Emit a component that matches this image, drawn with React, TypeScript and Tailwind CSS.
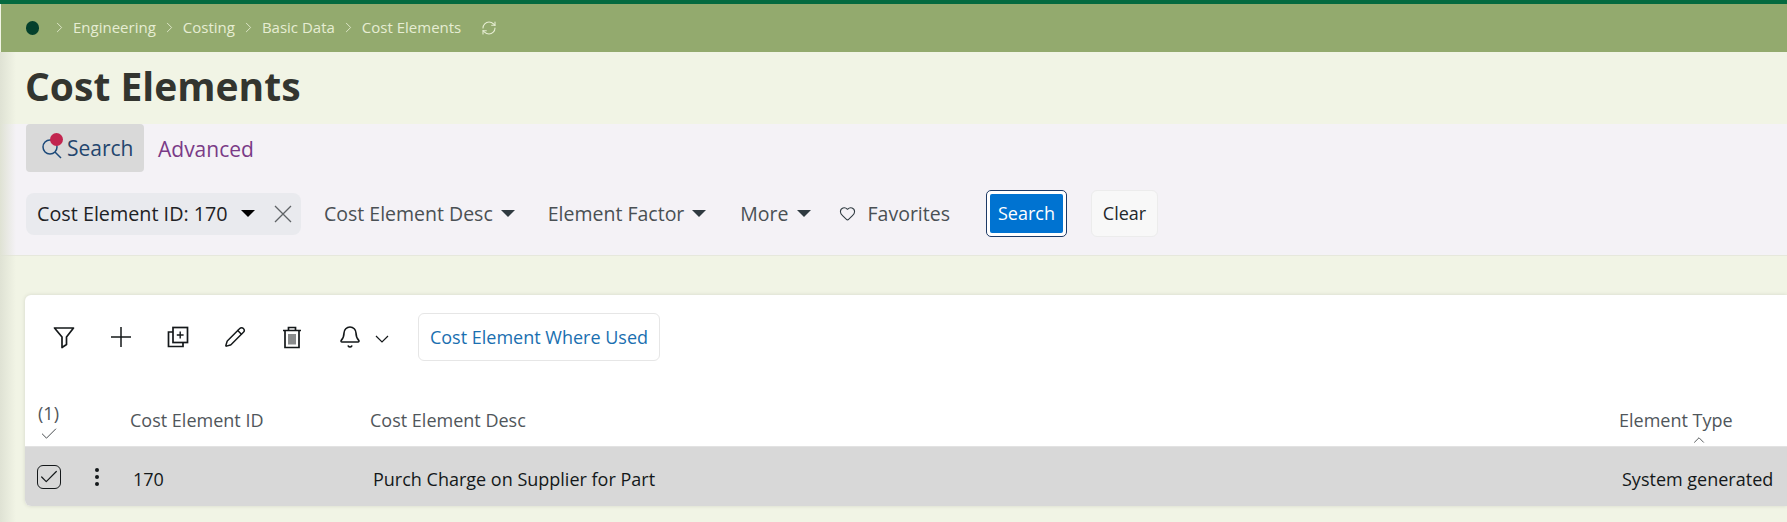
import { Bell, Check, ChevronRight, ChevronUp, Heart, Pencil, RefreshCw } from 'lucide-react';

const crumbs = ['Engineering', 'Costing', 'Basic Data', 'Cost Elements'];

function Caret({ color = 'border-t-[#2f3a40]' }: { color?: string }) {
  return <span className={`inline-block h-0 w-0 border-x-[7px] border-t-[7px] border-x-transparent ${color}`} />;
}

function FilterMenu({ label, className }: { label: string; className: string }) {
  return (
    <div className={`flex items-center gap-[8px] text-[19.5px] text-[#4a5054] ${className}`}>
      <span>{label}</span>
      <Caret />
    </div>
  );
}

function FunnelIcon() {
  return (
    <svg width="24" height="24" viewBox="0 0 24 24" fill="none" stroke="#14181a" strokeWidth="1.7" strokeLinejoin="round">
      <path d="M2.5 3h19l-7 9v7.5l-4.5 3V12z" />
    </svg>
  );
}

function PlusIcon() {
  return (
    <svg width="20" height="20" viewBox="0 0 20 20" fill="none" stroke="#14181a" strokeWidth="1.5">
      <path d="M10 0v20M0 10h20" />
    </svg>
  );
}

function CopyPlusIcon() {
  return (
    <svg width="24" height="24" viewBox="0 0 24 24" fill="none" stroke="#14181a" strokeWidth="1.7">
      <rect x="7" y="2.5" width="14.5" height="15" />
      <path d="M7 7H2.5v14.5H17V17.5" />
      <path d="M14.2 6.5v7M10.8 10h6.8" strokeWidth="1.4" />
    </svg>
  );
}

function TrashIcon() {
  return (
    <svg width="24" height="24" viewBox="0 0 24 24" fill="none" stroke="#14181a" strokeWidth="1.7">
      <path d="M3 5.5h18M8.5 5.5V2.5h7v3" />
      <path d="M5 5.5v17h14v-17" />
      <path d="M9 9v10.5M11 9v10.5M13 9v10.5M15 9v10.5" strokeWidth="1" />
    </svg>
  );
}

function CloseIcon() {
  return (
    <svg width="18" height="18" viewBox="0 0 18 18" fill="none" stroke="#5f6366" strokeWidth="1.3">
      <path d="M1 1l16 16M17 1L1 17" />
    </svg>
  );
}

function SmallChevron() {
  return (
    <svg width="14" height="8" viewBox="0 0 14 8" fill="none" stroke="#14181a" strokeWidth="1.2">
      <path d="M1 1l6 6 6-6" />
    </svg>
  );
}

export default function App() {
  return (
    <div className="relative h-[522px] w-[1787px] overflow-hidden bg-[#f1f4e5] font-['Open_Sans',sans-serif]">
      <div className="h-1 bg-[#046a3f]" />

      <div className="ml-px flex h-12 items-center bg-[#93aa6e] pb-px pl-[25px] text-[15px] text-[#e6edd3]">
        <span className="h-[14px] w-[13px] rounded-full bg-[#04402c]" />
        <ChevronRight size={17} strokeWidth={1.2} className="ml-[12px] mr-[5px]" />
        {crumbs.map((crumb, i) => (
          <div key={crumb} className="flex items-center">
            {i > 0 && <ChevronRight size={17} strokeWidth={1.2} className="mx-[5px]" />}
            <span>{crumb}</span>
          </div>
        ))}
        <RefreshCw size={16} strokeWidth={1.6} className="ml-[20px]" />
      </div>

      <h1 className="ml-[25px] flex h-[72px] items-center pb-[4px] text-[39px] font-bold text-[#33352f]">Cost Elements</h1>

      <section className="ml-px h-[132px] border-b border-[#e6e8dc] bg-[#f4f2f6] pl-[25px]">
        <div className="flex h-12 items-center">
          <div className="flex h-12 w-[118px] items-center rounded-[4px] bg-[#d9d9d9] pl-[15px]">
            <span className="relative h-6 w-[22px]">
              <svg width="22" height="24" viewBox="0 0 22 24" fill="none" stroke="#1d4a7a" strokeWidth="1.5">
                <circle cx="9" cy="11" r="7" />
                <path d="M14 16l6 6" />
              </svg>
              <span className="absolute left-[9px] top-[-3px] h-[13px] w-[13px] rounded-full bg-[#c2254f]" />
            </span>
            <span className="ml-[4px] pt-px text-[21px] text-[#23456e]">Search</span>
          </div>
          <span className="ml-[14px] pt-[4px] text-[21px] text-[#7a3b87]">Advanced</span>
        </div>

        <div className="mt-[18px] flex h-[47px] items-center">
          <div className="flex h-[42px] w-[275px] items-center rounded-[8px] bg-[#e9eaee] pl-[11px] text-[19.75px] text-[#1e2225]">
            <span>Cost Element ID: 170</span>
            <span className="ml-[13px] flex"><Caret color="border-t-black" /></span>
            <span className="ml-[19px] flex"><CloseIcon /></span>
          </div>
          <FilterMenu label="Cost Element Desc" className="ml-[23px]" />
          <FilterMenu label="Element Factor" className="ml-[33px]" />
          <FilterMenu label="More" className="ml-[34px]" />
          <Heart size={17} strokeWidth={1.5} className="ml-[28px] text-[#2f3a40]" />
          <span className="ml-[12px] text-[19.5px] text-[#4a5054]">Favorites</span>
          <button className="ml-[36px] flex h-[47px] w-[81px] items-center justify-center rounded-[5px] border border-[#1d3a66] bg-white p-[3px]">
            <span className="flex h-full w-full items-center justify-center rounded-[2px] bg-[#0073d1] text-[18px] text-white">Search</span>
          </button>
          <button className="ml-[24px] h-[47px] w-[67px] rounded-[6px] border border-[#ececec] bg-[#f8f8f8] text-[18px] text-[#23282b]">Clear</button>
        </div>
      </section>

      <div className="ml-[25px] mt-[39px] h-[211px] rounded-l-[6px] bg-white shadow-[0_0_4px_rgba(0,0,0,0.12)]">
        <div className="flex h-[67px] items-end text-[#14181a]">
          <div className="flex items-center pb-[1px] pl-[27px]">
            <FunnelIcon />
            <span className="ml-[35px]"><PlusIcon /></span>
            <span className="ml-[35px]"><CopyPlusIcon /></span>
            <Pencil size={22} strokeWidth={1.6} className="ml-[34px]" />
            <span className="ml-[34px]"><TrashIcon /></span>
            <Bell size={24} strokeWidth={1.6} className="ml-[34px]" />
            <span className="ml-[13px] pt-[3px]"><SmallChevron /></span>
            <button className="ml-[29px] h-12 w-[242px] rounded-[6px] border border-[#e6e6e6] bg-white text-[18px] text-[#1a6fb0]">Cost Element Where Used</button>
          </div>
        </div>

        <div className="mt-[8px] flex h-[77px] border-b border-[#e2e2e2] text-[18px] text-[#50565b]">
          <div className="flex w-[45px] flex-col items-center justify-end pb-[2px] pl-[2px] text-[18px]">
            <span className="leading-[22px]">(1)</span>
            <Check size={20} strokeWidth={1} className="text-[#23282b]" />
          </div>
          <div className="flex w-[300px] items-end pb-[12px] pl-[60px]">Cost Element ID</div>
          <div className="flex flex-1 items-end pb-[12px]">Cost Element Desc</div>
          <div className="relative flex w-[168px] items-end pb-[12px]">
            Element Type
            <ChevronUp size={18} strokeWidth={1} className="absolute bottom-[-3px] left-[71px] text-[#23282b]" />
          </div>
        </div>

        <div className="flex h-[59px] items-center rounded-bl-[6px] bg-[#d8d8d8] pt-[6px] text-[18px] text-[#14181a]">
          <span className="mb-[6px] ml-[12px] flex h-6 w-6 items-center justify-center rounded-[6px] border-[1.5px] border-[#14181a]">
            <Check size={22} strokeWidth={1.3} />
          </span>
          <span className="mb-[6px] ml-[34px] flex flex-col gap-[3px]">
            <span className="h-[4px] w-[4px] rounded-full bg-[#14181a]" />
            <span className="h-[4px] w-[4px] rounded-full bg-[#14181a]" />
            <span className="h-[4px] w-[4px] rounded-full bg-[#14181a]" />
          </span>
          <span className="ml-[34px] w-[240px]">170</span>
          <span className="flex-1">Purch Charge on Supplier for Part</span>
          <span className="w-[165px]">System generated</span>
        </div>
      </div>

      <div className="pointer-events-none absolute bottom-0 left-0 top-[52px] w-[16px] bg-gradient-to-r from-[#dfe2d4] to-transparent" />
    </div>
  );
}
